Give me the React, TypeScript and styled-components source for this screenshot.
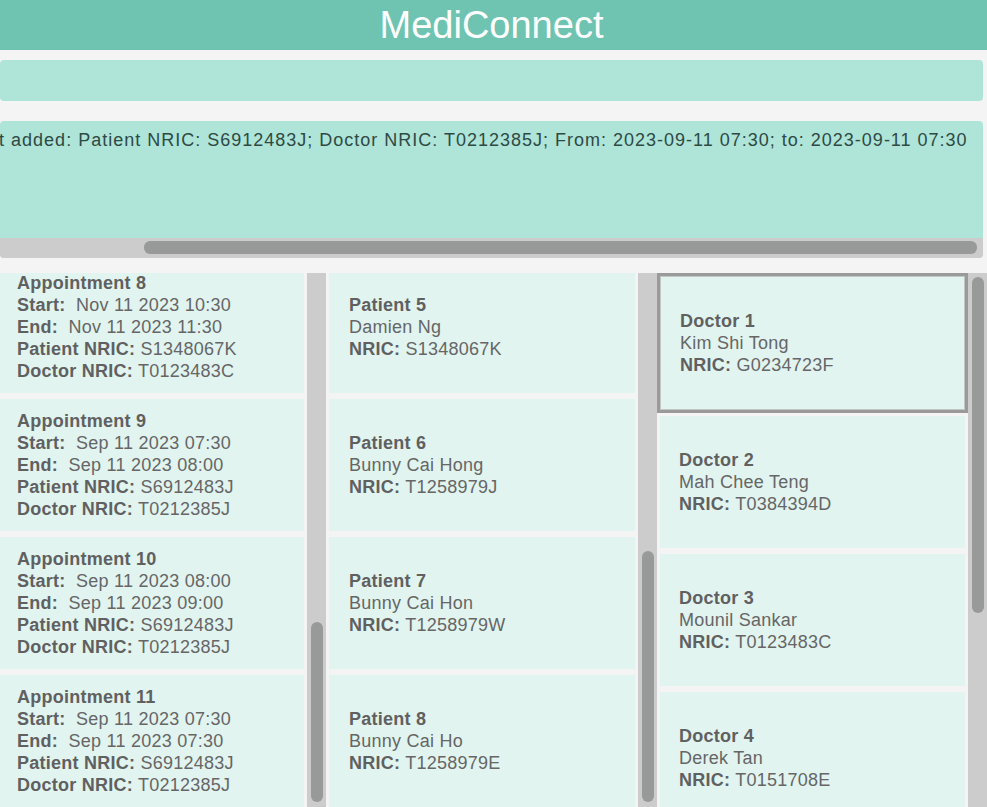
import React, { useLayoutEffect, useRef, useState } from "react";
import styled, { createGlobalStyle, css } from "styled-components";

const GlobalStyle = createGlobalStyle`
  html, body { margin: 0; padding: 0; background: #f4f4f4; overflow: hidden; }
  body { font-family: "Liberation Sans", Arial, sans-serif; }
  * { box-sizing: border-box; }
`;

const Shell = styled.div`
  height: 100vh;
  display: flex;
  flex-direction: column;
`;

const Header = styled.header`
  flex: none;
  height: 50px;
  padding-right: 4px;
  background: #6fc3b1;
  color: #ffffff;
  font-size: 38px;
  line-height: 50px;
  text-align: center;
`;

const CommandBox = styled.div`
  flex: none;
  margin: 10px 4px 0 0;
  height: 41px;
  background: #afe5d9;
  border-radius: 4px;
`;

const ResultBox = styled.div`
  flex: none;
  margin: 20px 4px 0 0;
  height: 137px;
  background: #afe4d8;
  border-radius: 4px;
  overflow: hidden;
  display: flex;
  flex-direction: column;
`;

const TextViewport = styled.div`
  flex: 1;
  min-height: 0;
  overflow: hidden;
  white-space: nowrap;
`;

const Message = styled.div`
  display: inline-block;
  padding: 8px 15px 0 13px;
  font-size: 18px;
  letter-spacing: 1px;
  line-height: 22px;
  color: #2d4a44;
`;

const HTrack = styled.div`
  flex: none;
  height: 20px;
  background: #cccccc;
  position: relative;
`;

const HThumb = styled.div`
  position: absolute;
  top: 3px;
  height: 13px;
  border-radius: 6px;
  background: #989a99;
`;

const Panels = styled.div`
  flex: 1;
  min-height: 0;
  margin-top: 15px;
  display: grid;
  grid-template-columns: 326px 331px 1fr;
  grid-template-rows: minmax(0, 1fr);
`;

const Pane = styled.div`
  display: flex;
  min-height: 0;
  min-width: 0;
`;

const Viewport = styled.div`
  flex: 1;
  min-width: 0;
  overflow: hidden;
`;

const VTrack = styled.div`
  flex: none;
  width: 19px;
  background: #cccccc;
  position: relative;
`;

const VThumb = styled.div`
  position: absolute;
  left: 4px;
  width: 12px;
  border-radius: 6px;
  background: #989a99;
`;

const Cell = styled.div<{ $flush?: boolean; $selected?: boolean }>`
  height: 138px;
  padding: ${(p) => (p.$flush ? "3px 3px 3px 0" : "3px")};
  ${(p) =>
    p.$selected &&
    css`
      height: 140px;
      padding: 0;
      border: 3px solid #9a9a9a;
    `}
`;

const Card = styled.div<{ $indent: number; $selected?: boolean }>`
  height: 100%;
  background: #e1f4f0;
  display: flex;
  flex-direction: column;
  justify-content: center;
  padding-left: ${(p) => p.$indent}px;
  font-size: 18px;
  letter-spacing: 0.25px;
  line-height: 22px;
  color: #666666;
  white-space: pre;
  overflow: hidden;
  ${(p) => p.$selected && css`box-shadow: inset 0 0 0 1px #c2c6c5;`}
`;

const Title = styled.div`
  font-weight: bold;
  color: #606060;
`;

const Line = styled.div``;

const Label = styled.b`
  font-weight: bold;
  color: #606060;
`;

type Appt = { start: string; end: string; patient: string; doctor: string };

const appointments: Appt[] = [
  { start: "Sep 01 2023 09:00", end: "Sep 01 2023 09:30", patient: "S1234567A", doctor: "G0234723F" },
  { start: "Sep 02 2023 10:00", end: "Sep 02 2023 10:30", patient: "T0123456B", doctor: "T0384394D" },
  { start: "Sep 03 2023 14:00", end: "Sep 03 2023 15:00", patient: "S7654321C", doctor: "T0123483C" },
  { start: "Sep 04 2023 11:00", end: "Sep 04 2023 11:30", patient: "S1348067K", doctor: "T0151708E" },
  { start: "Oct 05 2023 08:30", end: "Oct 05 2023 09:00", patient: "T1258979J", doctor: "G0234723F" },
  { start: "Oct 06 2023 13:00", end: "Oct 06 2023 13:30", patient: "T1258979W", doctor: "T0384394D" },
  { start: "Oct 07 2023 16:00", end: "Oct 07 2023 16:30", patient: "T1258979E", doctor: "T0123483C" },
  { start: "Nov 11 2023 10:30", end: "Nov 11 2023 11:30", patient: "S1348067K", doctor: "T0123483C" },
  { start: "Sep 11 2023 07:30", end: "Sep 11 2023 08:00", patient: "S6912483J", doctor: "T0212385J" },
  { start: "Sep 11 2023 08:00", end: "Sep 11 2023 09:00", patient: "S6912483J", doctor: "T0212385J" },
  { start: "Sep 11 2023 07:30", end: "Sep 11 2023 07:30", patient: "S6912483J", doctor: "T0212385J" },
];

type Person = { name: string; nric: string };

const patients: Person[] = [
  { name: "Alex Yeoh", nric: "S1234567A" },
  { name: "Bernice Yu", nric: "T0123456B" },
  { name: "Charlotte Oliveiro", nric: "S7654321C" },
  { name: "David Li", nric: "S6912483J" },
  { name: "Damien Ng", nric: "S1348067K" },
  { name: "Bunny Cai Hong", nric: "T1258979J" },
  { name: "Bunny Cai Hon", nric: "T1258979W" },
  { name: "Bunny Cai Ho", nric: "T1258979E" },
];

const doctors: Person[] = [
  { name: "Kim Shi Tong", nric: "G0234723F" },
  { name: "Mah Chee Teng", nric: "T0384394D" },
  { name: "Mounil Sankar", nric: "T0123483C" },
  { name: "Derek Tan", nric: "T0151708E" },
  { name: "Irfan Ibrahim", nric: "T0212385J" },
  { name: "Roy Balakrishnan", nric: "S8765432Z" },
];

const MESSAGE =
  "New appointment added: Patient NRIC: S6912483J; Doctor NRIC: T0212385J; From: 2023-09-11 07:30; to: 2023-09-11 07:30";

function ScrollPane({ children, fromEnd }: { children: React.ReactNode; fromEnd?: number }) {
  const ref = useRef<HTMLDivElement>(null);
  const [thumb, setThumb] = useState({ top: 0, len: 0 });

  useLayoutEffect(() => {
    const el = ref.current;
    if (!el) return;
    if (fromEnd !== undefined) el.scrollTop = el.scrollHeight - el.clientHeight - fromEnd;
    const track = el.clientHeight;
    const len = (track * el.clientHeight) / el.scrollHeight;
    const top = (track * el.scrollTop) / el.scrollHeight;
    setThumb({ top: top + 4, len: len - 8 });
  }, [fromEnd]);

  return (
    <Pane>
      <Viewport ref={ref}>{children}</Viewport>
      <VTrack>
        <VThumb style={{ top: thumb.top, height: thumb.len }} />
      </VTrack>
    </Pane>
  );
}

function ResultDisplay({ text }: { text: string }) {
  const ref = useRef<HTMLDivElement>(null);
  const [thumb, setThumb] = useState({ left: 0, len: 0 });

  useLayoutEffect(() => {
    const el = ref.current;
    if (!el) return;
    el.scrollLeft = el.scrollWidth;
    const track = el.clientWidth;
    const len = (track * el.clientWidth) / el.scrollWidth;
    const left = (track * el.scrollLeft) / el.scrollWidth;
    setThumb({ left: left + 4, len: len - 10 });
  }, [text]);

  return (
    <ResultBox>
      <TextViewport ref={ref}>
        <Message>{text}</Message>
      </TextViewport>
      <HTrack>
        <HThumb style={{ left: thumb.left, width: thumb.len }} />
      </HTrack>
    </ResultBox>
  );
}

export default function App() {
  return (
    <>
      <GlobalStyle />
      <Shell>
        <Header>MediConnect</Header>
        <CommandBox />
        <ResultDisplay text={MESSAGE} />
        <Panels>
          <ScrollPane fromEnd={3}>
            {appointments.map((a, i) => (
              <Cell key={i} $flush>
                <Card $indent={17}>
                  <Title>Appointment {i + 1}</Title>
                  <Line>
                    <Label>Start:</Label>
                    {"  "}
                    {a.start}
                  </Line>
                  <Line>
                    <Label>End:</Label>
                    {"  "}
                    {a.end}
                  </Line>
                  <Line>
                    <Label>Patient NRIC:</Label> {a.patient}
                  </Line>
                  <Line>
                    <Label>Doctor NRIC:</Label> {a.doctor}
                  </Line>
                </Card>
              </Cell>
            ))}
          </ScrollPane>
          <ScrollPane fromEnd={3}>
            {patients.map((p, i) => (
              <Cell key={i}>
                <Card $indent={20}>
                  <Title>Patient {i + 1}</Title>
                  <Line>{p.name}</Line>
                  <Line>
                    <Label>NRIC:</Label> {p.nric}
                  </Line>
                </Card>
              </Cell>
            ))}
          </ScrollPane>
          <ScrollPane>
            {doctors.map((d, i) => (
              <Cell key={i} $selected={i === 0}>
                <Card $indent={i === 0 ? 20 : 19} $selected={i === 0}>
                  <Title>Doctor {i + 1}</Title>
                  <Line>{d.name}</Line>
                  <Line>
                    <Label>NRIC:</Label> {d.nric}
                  </Line>
                </Card>
              </Cell>
            ))}
          </ScrollPane>
        </Panels>
      </Shell>
    </>
  );
}
